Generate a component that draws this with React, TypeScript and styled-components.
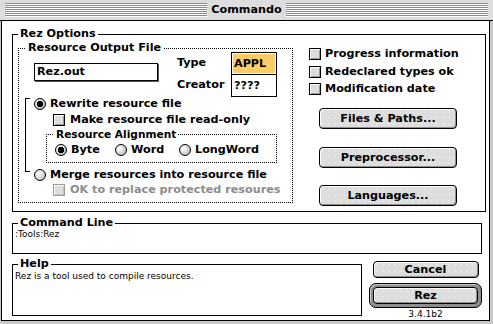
import React from "react";
import styled, { createGlobalStyle, css } from "styled-components";

const GlobalStyle = createGlobalStyle`
  html, body { margin: 0; padding: 0; background: #ffffff; }
  body { font-family: "DejaVu Sans", "Liberation Sans", sans-serif; }
  * { box-sizing: border-box; }
`;

const sysFont = css`
  font-family: "DejaVu Sans", Verdana, sans-serif;
  font-weight: bold;
  font-size: 11.2px;
  color: #000;
  white-space: nowrap;
`;

const smallFont = css`
  font-family: "DejaVu Sans", Verdana, sans-serif;
  font-weight: normal;
  font-size: 9px;
  line-height: 11px;
  color: #000;
  white-space: nowrap;
`;

const Window = styled.div`
  width: 493px;
  height: 324px;
  background: #c8c8c8;
  display: flex;
  flex-direction: column;
  overflow: hidden;
`;

const TitleBar = styled.div`
  flex: none;
  height: 21px;
  display: flex;
  align-items: center;
  gap: 4px;
  padding: 0 5px;
  background: #dddddd;
  border-bottom: 1px solid #000;
`;

const Stripes = styled.div`
  flex: 1;
  height: 14px;
  background: repeating-linear-gradient(
    to bottom,
    #8a8a8a 0px,
    #8a8a8a 1px,
    #ffffff 1px,
    #ffffff 2px
  );
`;

const Title = styled.span`
  ${sysFont};
  line-height: 20px;
`;

const Body = styled.div`
  flex: none;
  height: 300px;
  margin: 0 3px 0 1px;
  background: #ffffff;
  border: 1px solid #000;
  border-top: none;
  padding: 13px 0 0 10px;
  display: flex;
  flex-direction: column;
`;

const GroupBox = styled.div<{ $w: number; $h: number; $dotted?: boolean }>`
  position: relative;
  flex: none;
  width: ${(p) => p.$w}px;
  height: ${(p) => p.$h}px;
  border: 1px ${(p) => (p.$dotted ? "dotted" : "solid")} #000;
`;

const Legend = styled.span<{ $left: number; $size?: number }>`
  ${sysFont};
  ${(p) => p.$size && css`font-size: ${p.$size}px;`}
  position: absolute;
  top: -8px;
  left: ${(p) => p.$left}px;
  padding: 0 2px;
  line-height: 14px;
  background: #ffffff;
`;

const OptionsInner = styled.div`
  display: flex;
  padding: 13px 0 0 5px;
`;

const OutputInner = styled.div`
  display: flex;
  flex-direction: column;
  padding-top: 3px;
`;

const TopRow = styled.div`
  display: flex;
  padding-left: 15px;
`;

const Field = styled.div`
  margin-top: 11px;
  width: 124px;
  height: 18px;
  border: 1px solid #000;
  box-shadow: 1px 1px 0 #555;
  padding-left: 2px;
  ${sysFont};
  line-height: 16px;
`;

const LabelCol = styled.div`
  display: flex;
  flex-direction: column;
  width: 54px;
  margin-left: 19px;
`;

const FieldLabel = styled.div`
  ${sysFont};
  height: 22px;
  line-height: 22px;
`;

const CodeBox = styled.div`
  width: 46px;
  border: 1px solid #000;
  display: flex;
  flex-direction: column;
`;

const CodeCell = styled.div<{ $sep?: boolean }>`
  height: ${(p) => (p.$sep ? 22 : 21)}px;
  ${(p) => p.$sep && css`border-top: 1px solid #000;`}
  padding: 1px;
  display: flex;
`;

const CodeText = styled.div<{ $selected?: boolean }>`
  flex: 1;
  ${sysFont};
  line-height: 19px;
  padding-left: 1px;
  background: ${(p) => (p.$selected ? "#ffcc66" : "transparent")};
`;

const RadioSection = styled.div`
  position: relative;
  display: flex;
  flex-direction: column;
  padding-left: 15px;
  margin-top: 1px;
`;

const Bracket = styled.div`
  position: absolute;
  left: 6px;
  top: 0;
  width: 5px;
  height: 74px;
  border: 1px solid #000;
  border-right: none;
`;

const Row = styled.div<{ $indent?: number; $top?: number; $gap?: number }>`
  display: flex;
  align-items: center;
  height: 12px;
  gap: ${(p) => p.$gap ?? 4}px;
  padding-left: ${(p) => p.$indent ?? 0}px;
  margin-top: ${(p) => p.$top ?? 0}px;
`;

const Label = styled.span<{ $disabled?: boolean }>`
  ${sysFont};
  line-height: 12px;
  color: ${(p) => (p.$disabled ? "#8c8c8c" : "#000")};
`;

const Radio = styled.span<{ $on?: boolean }>`
  flex: none;
  width: 12px;
  height: 12px;
  border-radius: 50%;
  border: 1px solid #000;
  background: ${(p) =>
    p.$on
      ? "radial-gradient(circle at 50% 50%, #000 0, #000 3px, transparent 3.4px), radial-gradient(circle at 35% 35%, #ffffff 0, #dddddd 45%, #999 100%)"
      : "radial-gradient(circle at 35% 35%, #ffffff 0, #e2e2e2 40%, #a8a8a8 100%)"};
`;

const Check = styled.span<{ $disabled?: boolean }>`
  flex: none;
  width: 12px;
  height: 12px;
  border: 1px solid ${(p) => (p.$disabled ? "#9a9a9a" : "#000")};
  background: #dddddd;
  box-shadow: inset 1px 1px 0 #ffffff, inset -1px -1px 0 ${(p) => (p.$disabled ? "#c4c4c4" : "#999")};
`;

const AlignWrap = styled.div`
  margin: 8px 0 0 12px;
`;

const AlignInner = styled.div`
  display: flex;
  padding: 9px 0 0 8px;
`;

const AlignItem = styled.div<{ $w: number }>`
  display: flex;
  align-items: center;
  gap: 4px;
  width: ${(p) => p.$w}px;
  height: 12px;
`;

const RightCol = styled.div`
  display: flex;
  flex-direction: column;
  margin-left: 16px;
`;

const CheckList = styled.div`
  display: flex;
  flex-direction: column;
  gap: 5.5px;
`;

const ButtonList = styled.div`
  display: flex;
  flex-direction: column;
  gap: 17.5px;
  padding-left: 10px;
  margin-top: 13px;
`;

const Button = styled.div<{ $w: number; $h: number }>`
  ${sysFont};
  width: ${(p) => p.$w}px;
  height: ${(p) => p.$h}px;
  line-height: ${(p) => p.$h - 2}px;
  text-align: center;
  border: 1px solid #000;
  border-radius: 4px;
  background-color: #dddddd;
  background-image: radial-gradient(circle, #ececec 0.6px, transparent 0.8px);
  background-size: 6px 6px;
  box-shadow: inset 1px 1px 0 #ffffff, inset -1px -1px 0 #8e8e8e;
`;

const DefaultRing = styled.div`
  margin-top: 5px;
  padding: 3px;
  border: 1px solid #000;
  border-radius: 7px;
  background: #8e8e8e;
  box-shadow: inset 1px 1px 0 #c8c8c8;
`;

const TextArea = styled.div<{ $top: number }>`
  ${smallFont};
  padding: ${(p) => p.$top}px 0 0 2px;
`;

const BottomRow = styled.div`
  display: flex;
  align-items: flex-start;
  margin-top: 7px;
`;

const HelpWrap = styled.div`
  margin-top: 3px;
`;

const ActionCol = styled.div`
  display: flex;
  flex-direction: column;
  align-items: center;
  width: 113px;
  margin-left: 7px;
`;

const Version = styled.div`
  ${smallFont};
  margin-top: 1px;
`;

const Spacer = styled.div<{ $h: number }>`
  height: ${(p) => p.$h}px;
  flex: none;
`;

export default function App() {
  return (
    <>
      <GlobalStyle />
      <Window>
        <TitleBar>
          <Stripes />
          <Title>Commando</Title>
          <Stripes />
        </TitleBar>
        <Body>
          <GroupBox $w={474} $h={178}>
            <Legend $left={5}>Rez Options</Legend>
            <OptionsInner>
              <GroupBox $w={275} $h={155} $dotted>
                <Legend $left={7}>Resource Output File</Legend>
                <OutputInner>
                  <TopRow>
                    <Field>Rez.out</Field>
                    <LabelCol>
                      <FieldLabel>Type</FieldLabel>
                      <FieldLabel>Creator</FieldLabel>
                    </LabelCol>
                    <CodeBox>
                      <CodeCell>
                        <CodeText $selected>APPL</CodeText>
                      </CodeCell>
                      <CodeCell $sep>
                        <CodeText>????</CodeText>
                      </CodeCell>
                    </CodeBox>
                  </TopRow>
                  <RadioSection>
                    <Bracket />
                    <Row>
                      <Radio $on />
                      <Label>Rewrite resource file</Label>
                    </Row>
                    <Row $indent={19} $top={4} $gap={5}>
                      <Check />
                      <Label>Make resource file read-only</Label>
                    </Row>
                    <AlignWrap>
                      <GroupBox $w={231} $h={29} $dotted>
                        <Legend $left={7} $size={10.6}>
                          Resource Alignment
                        </Legend>
                        <AlignInner>
                          <AlignItem $w={60}>
                            <Radio $on />
                            <Label>Byte</Label>
                          </AlignItem>
                          <AlignItem $w={64}>
                            <Radio />
                            <Label>Word</Label>
                          </AlignItem>
                          <AlignItem $w={90}>
                            <Radio />
                            <Label>LongWord</Label>
                          </AlignItem>
                        </AlignInner>
                      </GroupBox>
                    </AlignWrap>
                    <Row $top={6}>
                      <Radio />
                      <Label>Merge resources into resource file</Label>
                    </Row>
                    <Row $indent={19} $top={3} $gap={5}>
                      <Check $disabled />
                      <Label $disabled>OK to replace protected resoures</Label>
                    </Row>
                  </RadioSection>
                </OutputInner>
              </GroupBox>
              <RightCol>
                <CheckList>
                  <Row $gap={4}>
                    <Check />
                    <Label>Progress information</Label>
                  </Row>
                  <Row $gap={4}>
                    <Check />
                    <Label>Redeclared types ok</Label>
                  </Row>
                  <Row $gap={4}>
                    <Check />
                    <Label>Modification date</Label>
                  </Row>
                </CheckList>
                <ButtonList>
                  <Button $w={138} $h={21}>Files &amp; Paths...</Button>
                  <Button $w={138} $h={21}>Preprocessor...</Button>
                  <Button $w={138} $h={21}>Languages...</Button>
                </ButtonList>
              </RightCol>
            </OptionsInner>
          </GroupBox>
          <Spacer $h={11} />
          <GroupBox $w={470} $h={31}>
            <Legend $left={5}>Command Line</Legend>
            <TextArea $top={5}>:Tools:Rez</TextArea>
          </GroupBox>
          <BottomRow>
            <HelpWrap>
              <GroupBox $w={350} $h={52}>
                <Legend $left={5}>Help</Legend>
                <TextArea $top={6}>Rez is a tool used to compile resources.</TextArea>
              </GroupBox>
            </HelpWrap>
            <ActionCol>
              <Button $w={106} $h={17}>Cancel</Button>
              <DefaultRing>
                <Button $w={105} $h={17}>Rez</Button>
              </DefaultRing>
              <Version>3.4.1b2</Version>
            </ActionCol>
          </BottomRow>
        </Body>
      </Window>
    </>
  );
}
